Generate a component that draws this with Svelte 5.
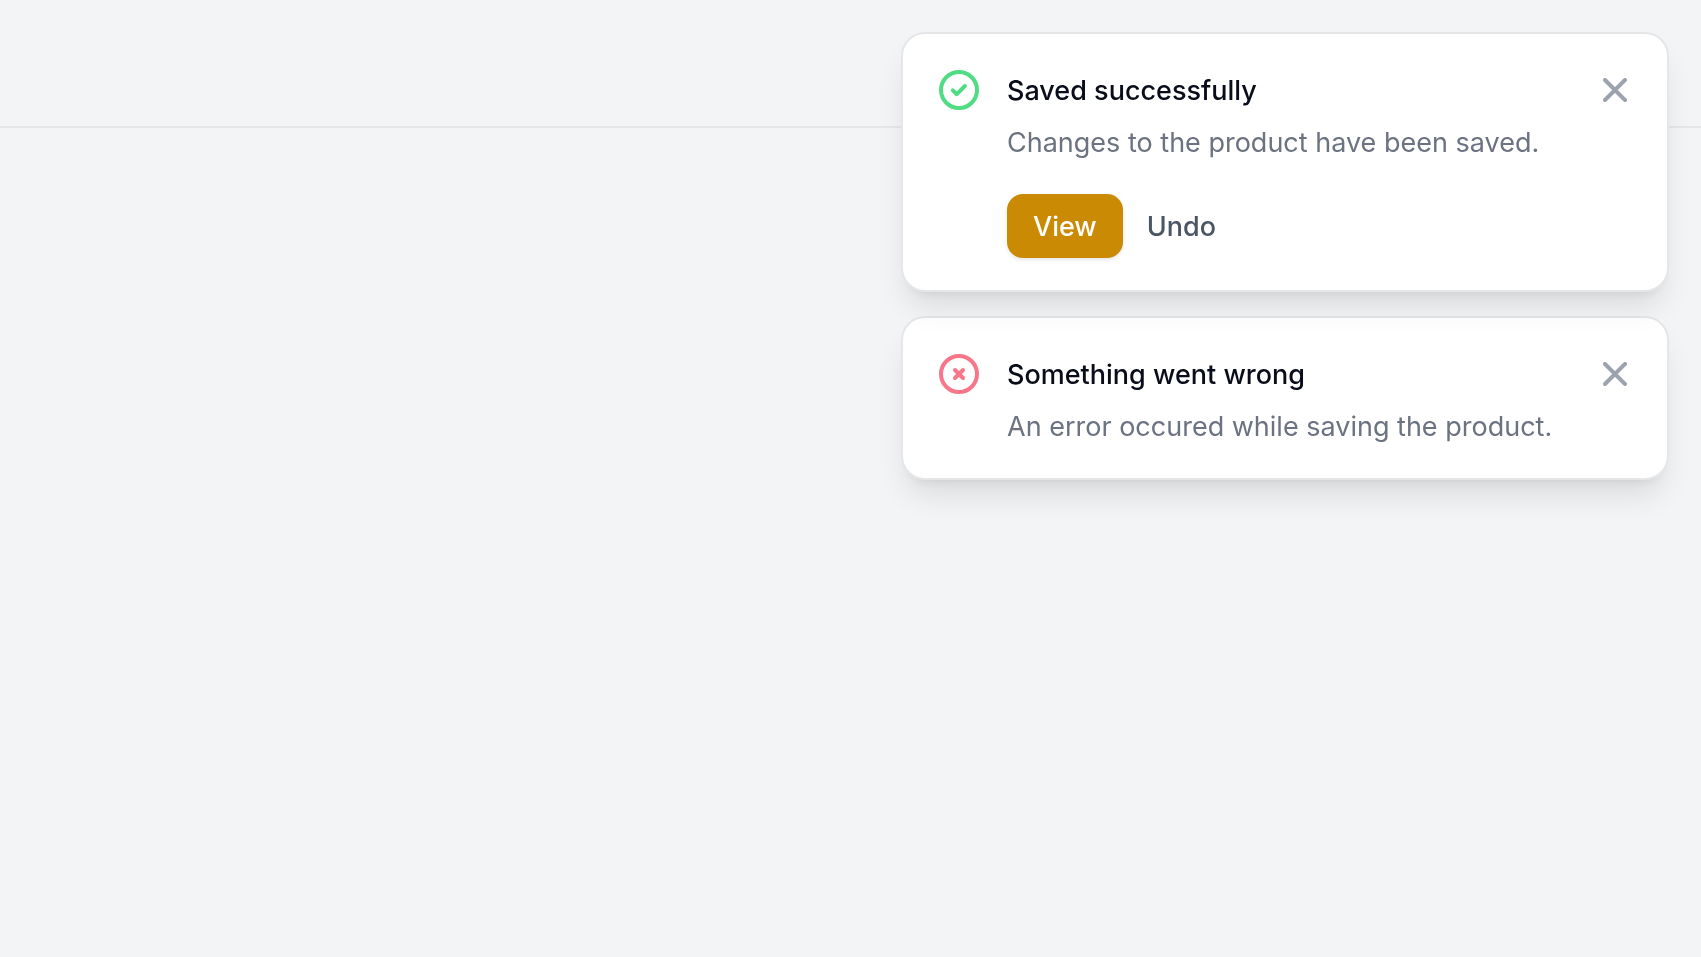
<script>
  let toasts = $state([
    {
      id: 1,
      status: 'success',
      title: 'Saved successfully',
      body: 'Changes to the product have been saved.',
      actions: true
    },
    {
      id: 2,
      status: 'danger',
      title: 'Something went wrong',
      body: 'An error occured while saving the product.',
      actions: false
    }
  ]);

  function dismiss(id) {
    toasts = toasts.filter((toast) => toast.id !== id);
  }
</script>

<div class="page">
  <header class="topbar"></header>

  <section class="toasts" aria-label="Notifications">
    {#each toasts as toast (toast.id)}
      <article class="toast" role="status">
        <svg class="status {toast.status}" viewBox="0 0 48 48" aria-hidden="true">
          <circle cx="24" cy="24" r="18" />
          {#if toast.status === 'success'}
            <path d="M17.8 24.4 L21.8 28.2 L29.9 20" />
          {:else}
            <path d="M20 20 L28 28 M28 20 L20 28" />
          {/if}
        </svg>

        <div class="content">
          <h3>{toast.title}</h3>
          <p>{toast.body}</p>
          {#if toast.actions}
            <div class="actions">
              <button class="primary" type="button">View</button>
              <button class="link" type="button">Undo</button>
            </div>
          {/if}
        </div>

        <button class="close" type="button" aria-label="Close" onclick={() => dismiss(toast.id)}>
          <svg viewBox="0 0 24 24" aria-hidden="true">
            <path d="M2 2 L22 22 M22 2 L2 22" />
          </svg>
        </button>
      </article>
    {/each}
  </section>
</div>

<style>
  :global(body) {
    margin: 0;
    background: #f3f4f6;
  }

  .page {
    min-height: 100vh;
    font-family: Inter, 'Open Sans', sans-serif;
    font-size: 27px;
    line-height: 42px;
  }

  .topbar {
    height: 126px;
    border-bottom: 2px solid #e5e7ea;
  }

  .toasts {
    position: fixed;
    top: 0;
    right: 0;
    box-sizing: border-box;
    width: 100%;
    max-width: 832px;
    padding: 32px;
    display: flex;
    flex-direction: column;
    gap: 24px;
  }

  .toast {
    display: flex;
    align-items: flex-start;
    gap: 24px;
    padding: 32px 32px 30px;
    border: 2px solid #e5e6e8;
    border-radius: 24px;
    background: #fff;
    box-shadow:
      0 20px 30px -6px rgba(0, 0, 0, 0.1),
      0 8px 12px -8px rgba(0, 0, 0, 0.1);
  }

  .toast:first-child {
    position: relative;
    z-index: 1;
  }

  svg {
    display: block;
    fill: none;
    stroke: currentColor;
    stroke-width: 4;
    stroke-linecap: round;
    stroke-linejoin: round;
  }

  .status {
    flex: none;
    width: 48px;
    height: 48px;
  }

  .success {
    color: #4fdc83;
  }

  .danger {
    color: #f7768a;
  }

  .content {
    flex: 1;
    min-width: 0;
  }

  h3 {
    margin: 0;
    font-size: 27px;
    font-weight: 500;
    line-height: 50px;
    color: #090d1a;
  }

  p {
    margin: 6px 0 0;
    color: #6b7280;
  }

  .actions {
    display: flex;
    align-items: center;
    gap: 24px;
    margin: 30px 0 2px;
  }

  button {
    padding: 0;
    border: 0;
    background: none;
    font: inherit;
    cursor: pointer;
  }

  .primary,
  .link {
    padding: 12px 0 10px;
    font-weight: 500;
  }

  .primary {
    padding-inline: 26px;
    border-radius: 16px;
    background: #ca8a04;
    color: #fff;
    box-shadow: 0 2px 4px rgba(0, 0, 0, 0.1);
  }

  .link {
    color: #4b5563;
  }

  .close {
    flex: none;
    display: grid;
    place-items: center;
    width: 40px;
    height: 48px;
    color: #9ca3af;
  }

  .close svg {
    width: 24px;
    height: 24px;
  }
</style>
